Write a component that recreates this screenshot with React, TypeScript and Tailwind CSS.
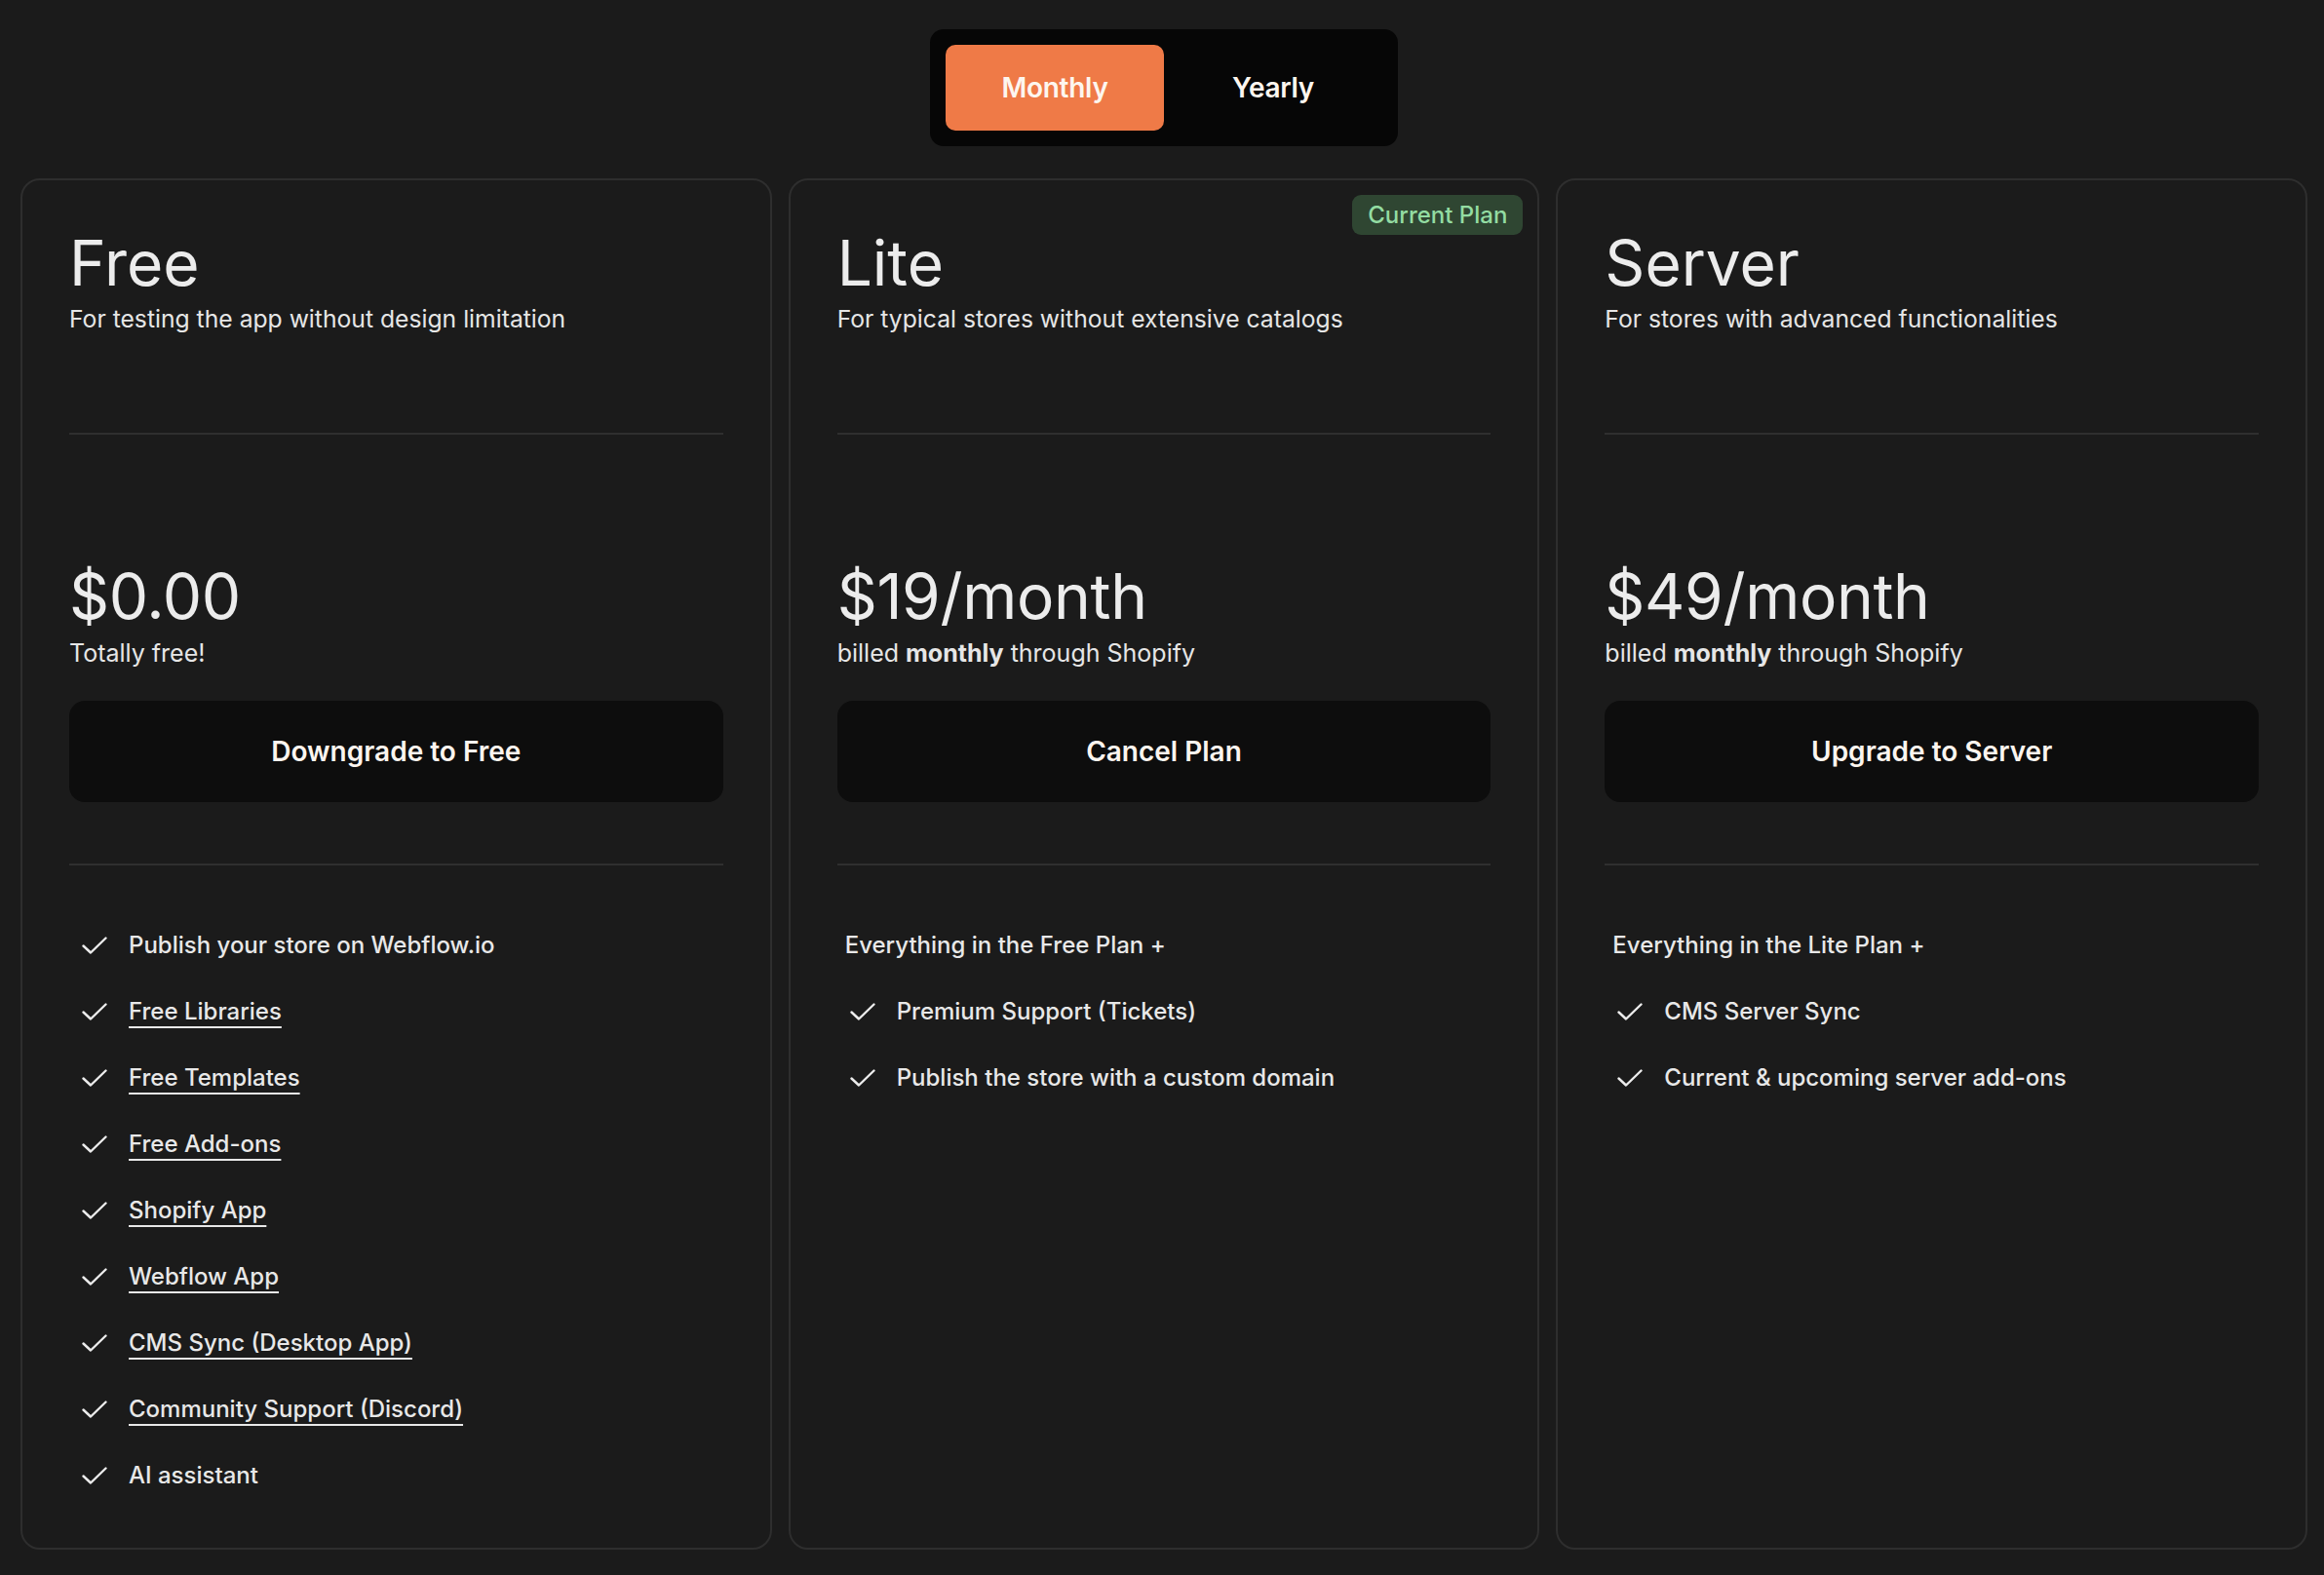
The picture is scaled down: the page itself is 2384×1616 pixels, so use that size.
import { useState } from 'react';

type Feature = { label: string; link?: boolean };

type Plan = {
  name: string;
  blurb: string;
  price: string;
  note: React.ReactNode;
  cta: string;
  current?: boolean;
  intro?: string;
  features: Feature[];
};

const plans: Plan[] = [
  {
    name: 'Free',
    blurb: 'For testing the app without design limitation',
    price: '$0.00',
    note: 'Totally free!',
    cta: 'Downgrade to Free',
    features: [
      { label: 'Publish your store on Webflow.io' },
      { label: 'Free Libraries', link: true },
      { label: 'Free Templates', link: true },
      { label: 'Free Add-ons', link: true },
      { label: 'Shopify App', link: true },
      { label: 'Webflow App', link: true },
      { label: 'CMS Sync (Desktop App)', link: true },
      { label: 'Community Support (Discord)', link: true },
      { label: 'AI assistant' },
    ],
  },
  {
    name: 'Lite',
    blurb: 'For typical stores without extensive catalogs',
    price: '$19/month',
    note: (
      <>
        billed <span className="font-bold">monthly</span> through Shopify
      </>
    ),
    cta: 'Cancel Plan',
    current: true,
    intro: 'Everything in the Free Plan +',
    features: [{ label: 'Premium Support (Tickets)' }, { label: 'Publish the store with a custom domain' }],
  },
  {
    name: 'Server',
    blurb: 'For stores with advanced functionalities',
    price: '$49/month',
    note: (
      <>
        billed <span className="font-bold">monthly</span> through Shopify
      </>
    ),
    cta: 'Upgrade to Server',
    intro: 'Everything in the Lite Plan +',
    features: [{ label: 'CMS Server Sync' }, { label: 'Current & upcoming server add-ons' }],
  },
];

function Tick() {
  return (
    <svg width="26" height="18" viewBox="0 0 26 18" fill="none" className="shrink-0">
      <polyline points="1.5,9.5 9,16.5 24.5,1.5" stroke="#ececec" strokeWidth="2.4" strokeLinecap="round" strokeLinejoin="round" />
    </svg>
  );
}

function PlanCard({ plan }: { plan: Plan }) {
  return (
    <div className="relative flex min-h-[1407px] flex-col rounded-[20px] border-2 border-[#2e2e2e] px-12 pt-[53px]">
      {plan.current && (
        <span className="absolute right-[15px] top-[15px] rounded-[9px] bg-[#2f4632] px-[16px] py-[4px] text-[24px] font-medium leading-[33px] text-[#93dca2]">
          Current Plan
        </span>
      )}

      {/* nom + description */}
      <h2 className="text-[64px] font-normal leading-none text-[#ececec]">{plan.name}</h2>
      <p className="mt-[9px] text-[24.7px] leading-[32px] text-[#e6e6e6]">{plan.blurb}</p>

      <div className="mt-[101px] h-[2px] bg-[#2f2f2f]" />

      {/* prix */}
      <div className="mt-[134px] text-[64px] font-normal leading-none tracking-[-0.005em] text-[#ececec]">{plan.price}</div>
      <p className="mt-[10px] text-[25px] leading-[32px] text-[#e6e6e6]">{plan.note}</p>

      <button className="mt-[33px] h-[104px] w-full rounded-[16px] bg-[#0d0d0d] text-[28px] font-semibold text-[#fcf5ef]">
        {plan.cta}
      </button>

      <div className="mt-[63px] h-[2px] bg-[#2f2f2f]" />

      {/* liste */}
      <ul className="mt-[66px] flex flex-col gap-[36px] text-[24px] font-medium leading-[32px] text-[#e8e8e8]">
        {plan.intro && <li className="pl-[8px]">{plan.intro}</li>}
        {plan.features.map((f) => (
          <li key={f.label} className="flex items-center gap-[22px] pl-[13px]">
            <Tick />
            <span className={f.link ? 'underline decoration-2 underline-offset-[7px]' : ''}>{f.label}</span>
          </li>
        ))}
      </ul>
    </div>
  );
}

export default function App() {
  const [period, setPeriod] = useState<'monthly' | 'yearly'>('monthly');

  return (
    <main className="min-h-screen bg-[#1b1b1b] pb-[26px] pl-[21px] pr-[17px] pt-[30px] font-['Inter','Noto_Sans',sans-serif]">
      {/* Mensuel / Annuel */}
      <div className="mx-auto flex w-fit rounded-[14px] bg-[#060606] p-4">
        {(['monthly', 'yearly'] as const).map((p) => (
          <button
            key={p}
            onClick={() => setPeriod(p)}
            className={`h-[88px] w-[224px] rounded-[10px] text-[28px] font-semibold tracking-[-0.01em] text-[#fdf6ef] ${
              period === p ? 'bg-[#ef7a47]' : 'bg-transparent'
            }`}
          >
            {p === 'monthly' ? 'Monthly' : 'Yearly'}
          </button>
        ))}
      </div>

      <div className="mt-[33px] grid grid-cols-3 gap-[17px]">
        {plans.map((plan) => (
          <PlanCard key={plan.name} plan={plan} />
        ))}
      </div>
    </main>
  );
}
